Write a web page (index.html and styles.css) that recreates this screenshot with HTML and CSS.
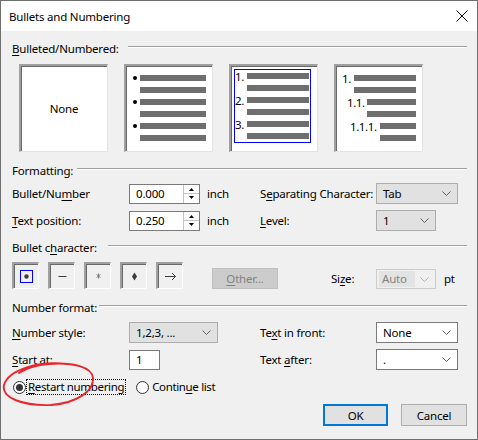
FILE: index.html
```html
<!DOCTYPE html>
<html>
<head>
<meta charset="utf-8">
<link rel="stylesheet" href="styles.css">
</head>
<body>
<div class="window">
  <div class="titlebar">
    <span class="title">Bullets and Numbering</span>
    <svg class="close" width="12" height="12" viewBox="0 0 12 12"><path d="M0.5 0.5L11.5 11.5M11.5 0.5L0.5 11.5" stroke="#000" stroke-width="1" fill="none"/></svg>
  </div>
  <div class="body">
    <div class="group-head"><span class="gl gl1"><u>B</u>ulleted/Numbered:</span><i class="rule"></i></div>
    <div class="previews">
      <div class="preview none">None</div>
      <div class="preview">
        <div class="list list-b">
          <div class="li"><span class="mk mk-b"><span class="dot"></span></span><div class="bars w66"><b></b><b></b></div></div>
          <div class="li"><span class="mk mk-b"><span class="dot"></span></span><div class="bars w66"><b></b><b></b></div></div>
          <div class="li"><span class="mk mk-b"><span class="dot"></span></span><div class="bars w66"><b></b><b></b></div></div>
        </div>
      </div>
      <div class="preview">
        <div class="focus">
          <div class="li"><span class="mk mk-n">1.</span><div class="bars w62"><b></b><b></b></div></div>
          <div class="li"><span class="mk mk-n">2.</span><div class="bars w62"><b></b><b></b></div></div>
          <div class="li"><span class="mk mk-n">3.</span><div class="bars w62"><b></b><b></b></div></div>
        </div>
      </div>
      <div class="preview">
        <div class="list list-o">
          <div class="li"><span class="mk mk-o1">1.</span><div class="bars w62"><b></b><b></b></div></div>
          <div class="li lv2"><span class="mk mk-o2">1.1.</span><div class="bars w49"><b></b><b></b></div></div>
          <div class="li lv3"><span class="mk mk-o3">1.1.1.</span><div class="bars w36"><b></b><b></b></div></div>
        </div>
      </div>
    </div>

    <div class="group-head gh2"><span class="gl gl2">Formatting:</span><i class="rule"></i></div>
    <div class="form">
      <span>Bullet/Nu<u>m</u>ber</span>
      <div class="spin"><span class="val">0.000</span><span class="spinbtns"><svg width="15" height="18" viewBox="0 0 15 18"><path d="M0 8.5H15" stroke="#c4c4c4"/><path d="M5 6L7.5 3L10 6Z" fill="#000"/><path d="M5 11H10L7.5 14Z" fill="#000"/></svg></span></div>
      <span>inch</span>
      <span>S<u>e</u>parating Character:</span>
      <div class="combo gray w82"><span>Tab</span><svg class="chev" width="9" height="5" viewBox="0 0 9 5"><path d="M0.5 0.5L4.5 4.5L8.5 0.5" stroke="#606060" fill="none"/></svg></div>

      <span><u>T</u>ext position:</span>
      <div class="spin"><span class="val">0.250</span><span class="spinbtns"><svg width="15" height="18" viewBox="0 0 15 18"><path d="M0 8.5H15" stroke="#c4c4c4"/><path d="M5 6L7.5 3L10 6Z" fill="#000"/><path d="M5 11H10L7.5 14Z" fill="#000"/></svg></span></div>
      <span>inch</span>
      <span><u>L</u>evel:</span>
      <div class="combo gray w60"><span>1</span><svg class="chev" width="9" height="5" viewBox="0 0 9 5"><path d="M0.5 0.5L4.5 4.5L8.5 0.5" stroke="#606060" fill="none"/></svg></div>
    </div>

    <div class="group-head gh3"><span class="gl gl3">Bullet c<u>h</u>aracter:</span><i class="rule"></i></div>
    <div class="bullets">
      <div class="bbtn"><span class="bfocus"><svg width="11" height="11" viewBox="0 0 11 11"><circle cx="5.5" cy="5.5" r="2.2" fill="#3c3c3c"/></svg></span></div>
      <div class="bbtn"><svg width="11" height="11" viewBox="0 0 11 11"><path d="M1.5 5.5H9.5" stroke="#3c3c3c"/></svg></div>
      <div class="bbtn"><svg width="11" height="11" viewBox="0 0 11 11"><path d="M5.5 2.5V7.5M3.5 3.5L7.5 6.5M7.5 3.5L3.5 6.5" stroke="#777" stroke-width="0.9"/></svg></div>
      <div class="bbtn"><svg width="11" height="11" viewBox="0 0 11 11"><path d="M5.5 1.5L8 5.5L5.5 9.5L3 5.5Z" fill="#3c3c3c"/></svg></div>
      <div class="bbtn"><svg width="13" height="11" viewBox="0 0 13 11"><path d="M1 5.5H11.5M8 2L11.5 5.5L8 9" stroke="#3c3c3c" fill="none"/></svg></div>
      <div class="btn other"><u>O</u>ther...</div>
      <span class="sizelbl">Si<u>z</u>e:</span>
      <div class="combo disabled w60"><span class="auto">Auto</span><svg class="chev" width="9" height="5" viewBox="0 0 9 5"><path d="M0.5 0.5L4.5 4.5L8.5 0.5" stroke="#b0b0b0" fill="none"/></svg></div>
      <span class="pt">pt</span>
    </div>

    <div class="group-head gh4"><span class="gl gl4">Number format:</span><i class="rule"></i></div>
    <div class="nform">
      <span><u>N</u>umber style:</span>
      <div class="combo gray w89"><span>1,2,3, ...</span><svg class="chev" width="9" height="5" viewBox="0 0 9 5"><path d="M0.5 0.5L4.5 4.5L8.5 0.5" stroke="#606060" fill="none"/></svg></div>
      <span>Te<u>x</u>t in front:</span>
      <div class="combo white w82"><span>None</span><svg class="chev" width="9" height="5" viewBox="0 0 9 5"><path d="M0.5 0.5L4.5 4.5L8.5 0.5" stroke="#606060" fill="none"/></svg></div>

      <span><u>S</u>tart at:</span>
      <div class="edit w31"><span>1</span></div>
      <span>Text <u>a</u>fter:</span>
      <div class="combo white w82"><span>.</span><svg class="chev" width="9" height="5" viewBox="0 0 9 5"><path d="M0.5 0.5L4.5 4.5L8.5 0.5" stroke="#606060" fill="none"/></svg></div>
    </div>

    <div class="radios">
      <span class="radio on"><i></i></span>
      <span class="rlabel focused"><u>R</u>estart numbering</span>
      <span class="radio second"></span>
      <span class="rlabel">Contin<u>u</u>e list</span>
    </div>

    <div class="buttons">
      <div class="btn ok">OK</div>
      <div class="btn cancel">Cancel</div>
    </div>
  </div>
  <svg class="annot" width="100" height="50" viewBox="0 0 100 50"><path d="M66 3C38 0 8 8 3 24C0 37 22 45 50 44C76 42 93 30 92 17C91 6 72 1 48 3C34 4 25 7 18 12" stroke="#e8262b" stroke-width="1.9" fill="none" stroke-linecap="round"/></svg>
</div>
</body>
</html>
```

FILE: styles.css
```css
* { box-sizing: border-box; }
html, body { margin: 0; padding: 0; background: #f0f0f0; }
u { text-decoration: underline; text-underline-offset: 2px; }

.window {
  position: relative;
  width: 478px;
  height: 440px;
  border: 1px solid #6f6f6f;
  background: #f0f0f0;
  font-family: "Noto Sans", "Open Sans", sans-serif;
  font-size: 11.5px;
  letter-spacing: -0.2px;
  color: #000;
  display: flex;
  flex-direction: column;
  overflow: hidden;
  white-space: nowrap;
}

.titlebar {
  height: 30px;
  background: #fff;
  display: flex;
  align-items: center;
  padding-left: 8px;
  padding-right: 9px;
}
.title { flex: 1; }

.body {
  display: flex;
  flex-direction: column;
  padding: 0 10px 0 11px;
}

.group-head {
  display: flex;
  align-items: center;
  height: 16px;
  line-height: 16px;
  margin-top: 10px;
}
.gl { flex: none; }
.gl1 { width: 116px; }
.gl2 { width: 65px; }
.gl3 { width: 96px; }
.gl4 { width: 87px; }
.rule {
  flex: 1;
  height: 2px;
  border-top: 1px solid #a0a0a0;
  border-bottom: 1px solid #ffffff;
  margin-bottom: 4px;
}
.gh2 { margin-top: 11px; }
.gh3 { margin-top: 9px; }
.gh4 { margin-top: 11px; }

.previews {
  display: flex;
  gap: 16px;
  margin: 7px 0 0 7px;
}
.preview {
  width: 89px;
  height: 88px;
  background: #fff;
  border-style: solid;
  border-width: 2px 1px 1px 2px;
  border-color: #a0a0a0 #e3e3e3 #e3e3e3 #a0a0a0;
  box-shadow: inset 1px 1px 0 #696969;
}
.none {
  display: flex;
  align-items: center;
  justify-content: center;
}
.list { padding: 9px 0 0 6px; }
.li { display: flex; margin-bottom: 6px; }
.mk {
  flex: none;
  height: 6px;
  line-height: 7px;
  letter-spacing: -0.4px;
}
.mk-b { width: 8px; display: flex; align-items: center; }
.dot { width: 4px; height: 4px; border-radius: 50%; background: #000; margin-left: 1px; }
.mk-n { width: 12px; }
.mk-o1 { width: 12px; }
.mk-o2 { width: 20px; }
.mk-o3 { width: 30px; }
.lv2 { margin-left: 5px; }
.lv3 { margin-left: 8px; }
.bars { display: flex; flex-direction: column; gap: 6px; }
.bars b { display: block; height: 6px; background: #6e6e6e; }
.w66 { width: 66px; }
.w62 { width: 62px; }
.w49 { width: 49px; }
.w36 { width: 36px; }

.focus {
  margin: 3px 0 0 3px;
  width: 77px;
  height: 74px;
  border: 1px solid #0000ff;
  padding-top: 3px;
}

.form {
  display: grid;
  grid-template-columns: 117px 78px 53px 116px auto;
  grid-auto-rows: 21px;
  row-gap: 6px;
  align-items: center;
  margin-top: 4px;
}
.spin {
  width: 71px;
  height: 20px;
  background: #fff;
  border: 1px solid #7a7a7a;
  display: flex;
  align-items: stretch;
}
.spin .val { flex: 1; padding-left: 6px; line-height: 18px; }
.spinbtns {
  width: 16px;
  border-left: 1px solid #c4c4c4;
  display: flex;
}
.combo {
  height: 21px;
  display: flex;
  align-items: center;
  justify-content: space-between;
  padding: 0 6px 0 6px;
  border: 1px solid #adadad;
}
.combo.gray { background: #e1e1e1; }
.combo.white { background: #fff; border-color: #7a7a7a; }
.combo.disabled { background: #f0f0f0; border-color: #cccccc; color: #838383; height: 20px; padding-left: 2px; }
.auto { background: #e3e3e3; padding: 0 5px 0 3px; line-height: 16px; width: 36px; }
.w82 { width: 82px; }
.w60 { width: 60px; }
.w89 { width: 89px; }
.w31 { width: 31px; }

.bullets {
  display: flex;
  align-items: flex-end;
  margin-top: 6px;
}
.bbtn {
  width: 27px;
  height: 27px;
  margin-right: 9px;
  display: flex;
  align-items: center;
  justify-content: center;
  border-style: solid;
  border-width: 2px 1px 1px 2px;
  border-color: #a0a0a0 #ffffff #ffffff #a0a0a0;
  box-shadow: inset 1px 1px 0 #696969;
  background: #f0f0f0;
}
.bfocus {
  width: 13px;
  height: 13px;
  border: 1px solid #0000ff;
  display: flex;
  align-items: center;
  justify-content: center;
}
.btn {
  height: 22px;
  display: flex;
  align-items: center;
  justify-content: center;
  background: #e1e1e1;
  border: 1px solid #adadad;
}
.other {
  width: 66px;
  height: 21px;
  margin-left: 20px;
  background: #cccccc;
  border-color: #bfbfbf;
  color: #838383;
}
.sizelbl { margin-left: 53px; width: 45px; line-height: 20px; }
.pt { margin-left: 8px; line-height: 20px; }

.nform {
  display: grid;
  grid-template-columns: 117px 131px 116px auto;
  grid-auto-rows: 21px;
  row-gap: 6px;
  align-items: center;
  margin-top: 6px;
}
.edit {
  height: 20px;
  background: #fff;
  border: 1px solid #7a7a7a;
  padding-left: 6px;
  line-height: 18px;
}

.radios {
  display: flex;
  align-items: center;
  height: 16px;
  margin-top: 9px;
}
.radio {
  width: 13px;
  height: 13px;
  border: 1px solid #333;
  border-radius: 50%;
  background: #fff;
  margin-left: 1px;
  display: flex;
  align-items: center;
  justify-content: center;
}
.radio i { width: 7px; height: 7px; border-radius: 50%; background: #333; }
.rlabel { margin-left: 2px; padding: 0 1px; line-height: 14px; letter-spacing: -0.35px; }
.focused { outline: 1px dotted #000; margin-left: 1px; }
.radio.second { margin-left: 11px; }

.buttons {
  display: flex;
  justify-content: flex-end;
  gap: 13px;
  margin-top: 9px;
}
.ok { width: 65px; border: 2px solid #0078d7; }
.cancel { width: 66px; }

.annot {
  position: absolute;
  left: 0;
  top: 360px;
}
```
